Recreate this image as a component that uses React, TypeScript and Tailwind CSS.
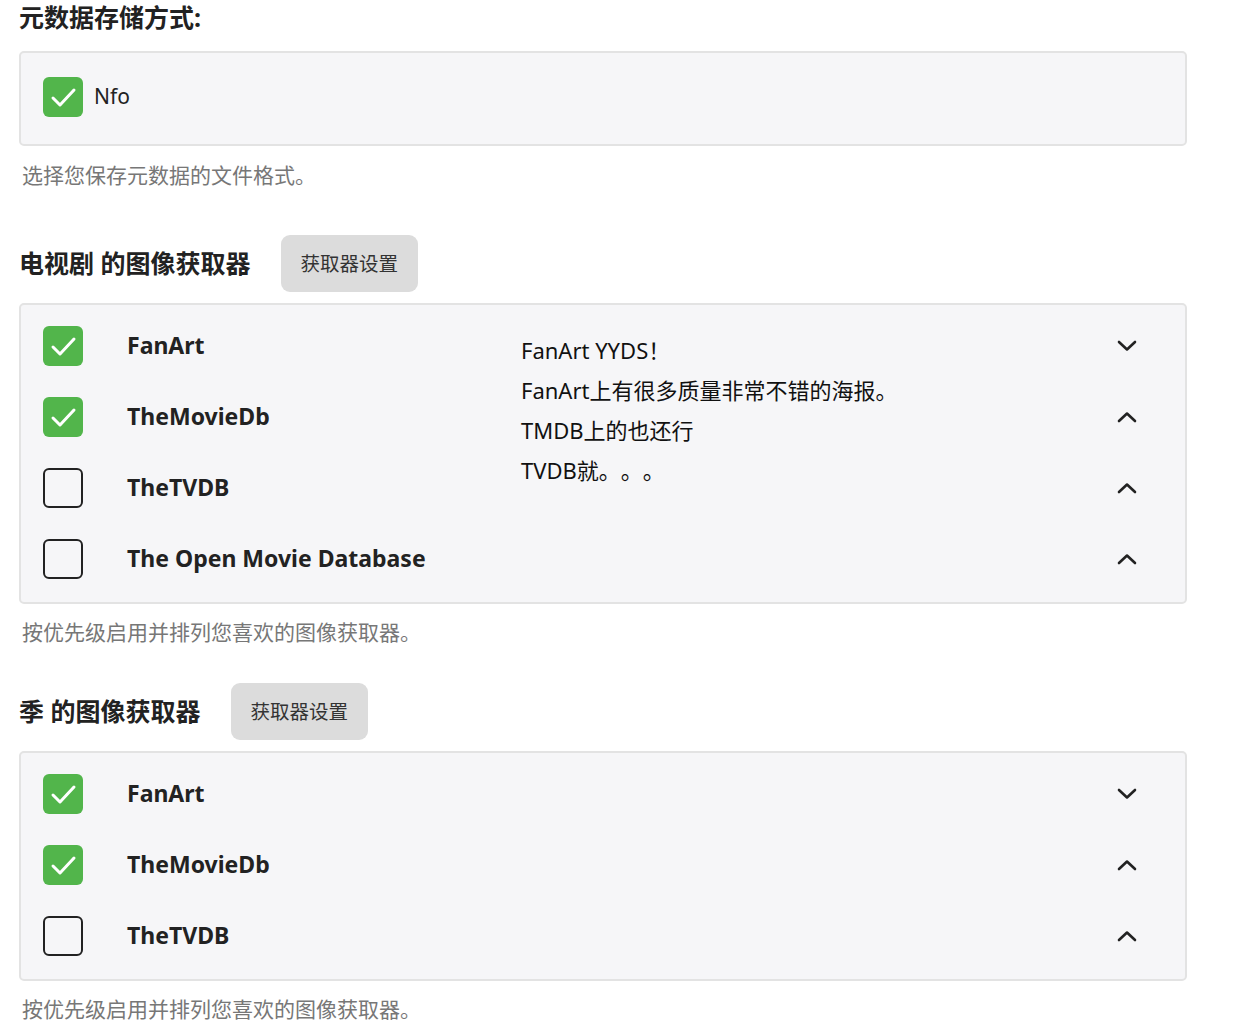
import React from 'react';

const FONT = '[font-family:"Noto_Sans","Noto_Sans_CJK_SC",sans-serif] [text-spacing-trim:space-all]';

type Fetcher = { name: string; checked: boolean; up: boolean };

const tvFetchers: Fetcher[] = [
    { name: 'FanArt', checked: true, up: false },
    { name: 'TheMovieDb', checked: true, up: true },
    { name: 'TheTVDB', checked: false, up: true },
    { name: 'The Open Movie Database', checked: false, up: true },
];

const seasonFetchers: Fetcher[] = [
    { name: 'FanArt', checked: true, up: false },
    { name: 'TheMovieDb', checked: true, up: true },
    { name: 'TheTVDB', checked: false, up: true },
];

function Checkbox({ checked }: { checked: boolean }) {
    if (checked) {
        return (
            <div className="w-10 h-10 rounded-[6px] bg-[#52b54b] flex items-center justify-center shrink-0">
                <svg width="30" height="30" viewBox="0 0 30 30" fill="none">
                    <path d="M5 16 L12 23 L26 8" stroke="white" strokeWidth="3" strokeLinecap="round" strokeLinejoin="round" />
                </svg>
            </div>
        );
    }
    return <div className="w-10 h-10 rounded-[6px] border-[2.5px] border-[#222] shrink-0" />;
}

function Chevron({ up }: { up: boolean }) {
    return (
        <svg width="20" height="12" viewBox="0 0 20 12" fill="none">
            <path
                d={up ? 'M2 10 L10 2.5 L18 10' : 'M2 2 L10 9.5 L18 2'}
                stroke="#222"
                strokeWidth="2.6"
                strokeLinecap="round"
                strokeLinejoin="round"
            />
        </svg>
    );
}

function FetcherCard({ items, notes }: { items: Fetcher[]; notes?: string[] }) {
    return (
        <div className="relative w-[1168px] mt-[11px] border-2 border-[#e3e3e3] rounded-[5px] bg-[#f6f6f8] px-[22px] pt-[5px] pb-[8px]">
            {items.map((item) => (
                <div key={item.name} className="h-[71px] flex items-center">
                    <Checkbox checked={item.checked} />
                    <span className="ml-[44px] text-[23px] font-bold text-[#222]">{item.name}</span>
                    <div className="ml-auto mr-[26px]">
                        <Chevron up={item.up} />
                    </div>
                </div>
            ))}

            {/* Notes overlay */}
            {notes && (
                <div className="absolute left-[500px] top-[25px] text-[22px] leading-[40px] text-[#111]">
                    {notes.map((n) => (
                        <div key={n}>{n}</div>
                    ))}
                </div>
            )}
        </div>
    );
}

function SectionHeader({ title }: { title: string }) {
    return (
        <div className="flex items-center h-[57px]">
            <h2 className="text-[25px] font-bold text-[#222]">{title}</h2>
            <button className="ml-[30px] h-[57px] px-[20px] rounded-[9px] bg-[#dcdcdc] text-[19.5px] text-[#333]">
                获取器设置
            </button>
        </div>
    );
}

export default function App() {
    return (
        <div className={`${FONT} bg-white w-[1240px] h-[1033px] overflow-hidden pl-[19px]`}>
            {/* Metadata saver */}
            <h2 className="h-[36px] flex items-center text-[25px] font-bold text-[#222]">元数据存储方式:</h2>
            <div className="w-[1168px] h-[95px] mt-[15px] border-2 border-[#e3e3e3] rounded-[5px] bg-[#f6f6f8] px-[22px] pb-[3px] flex items-center">
                <Checkbox checked={true} />
                <span className="ml-[11px] text-[21px] text-[#222]">Nfo</span>
            </div>
            <p className="mt-[14px] ml-[3px] text-[21px] leading-[30px] text-[#777]">选择您保存元数据的文件格式。</p>

            {/* Series image fetchers */}
            <div className="mt-[45px]">
                <SectionHeader title="电视剧 的图像获取器" />
                <FetcherCard
                    items={tvFetchers}
                    notes={['FanArt YYDS！', 'FanArt上有很多质量非常不错的海报。', 'TMDB上的也还行', 'TVDB就。。。']}
                />
                <p className="mt-[13px] ml-[3px] text-[21px] leading-[30px] text-[#777]">按优先级启用并排列您喜欢的图像获取器。</p>
            </div>

            {/* Season image fetchers */}
            <div className="mt-[36px]">
                <SectionHeader title="季 的图像获取器" />
                <FetcherCard items={seasonFetchers} />
                <p className="mt-[13px] ml-[3px] text-[21px] leading-[30px] text-[#777]">按优先级启用并排列您喜欢的图像获取器。</p>
            </div>
        </div>
    );
}
